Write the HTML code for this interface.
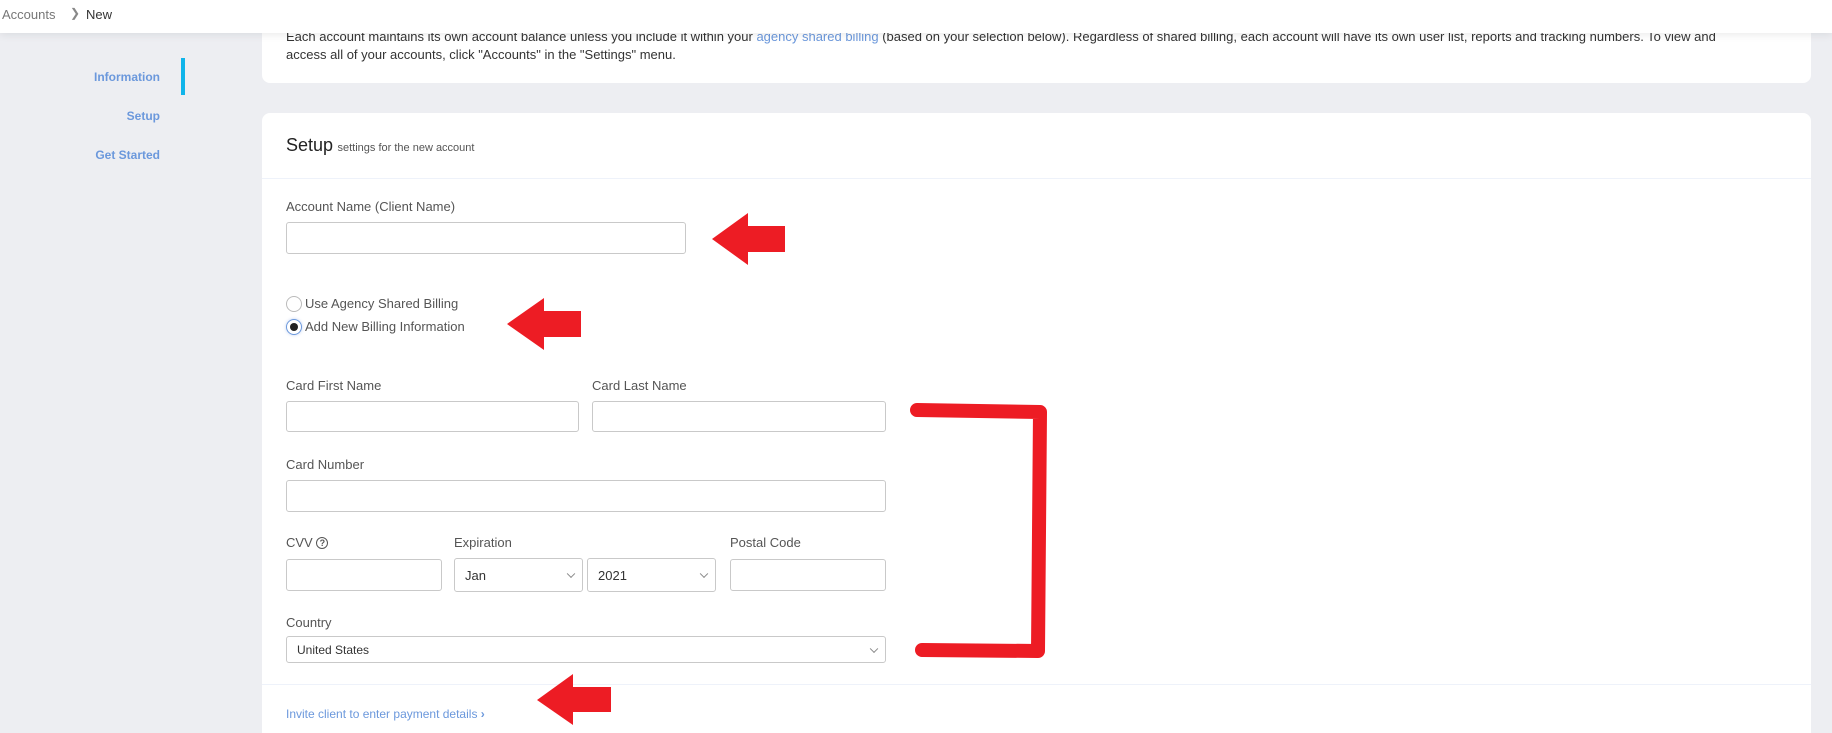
<!DOCTYPE html>
<html style="overflow:hidden;height:733px"><head><meta charset="utf-8"><style>
*{box-sizing:border-box;margin:0;padding:0}
body{width:1832px;height:733px;overflow:hidden;background:#edeef2;font-family:"Liberation Sans",sans-serif;color:#444;position:relative}
.a{position:absolute}
.hdr{left:0;top:0;width:1832px;height:33px;background:#fff;box-shadow:0 2px 8px rgba(0,0,0,.08);z-index:5;font-size:13px}
.card{background:#fff;border-radius:8px}
.lbl{font-size:13px;color:#555;line-height:16px}
.inp{border:1px solid #c9c9c9;border-radius:3px;background:#fff}
.nav{font-size:12px;font-weight:bold;color:#6b98dc;text-align:right;width:160px;left:0}
.sel{font-size:13px;color:#333;padding-left:10px;display:flex;align-items:center}
.chev{position:absolute;right:8px;top:50%;width:6px;height:6px;border-right:1.5px solid #888;border-bottom:1.5px solid #888;transform:translateY(-70%) rotate(45deg)}
</style></head><body>
<div class="a hdr"><span class="a" style="left:2px;top:7px;color:#777">Accounts</span><span class="a" style="left:70px;top:6px;color:#888;font-size:12px">&#10095;</span><span class="a" style="left:86px;top:7px;color:#333">New</span></div>

<div class="a nav" style="top:70px">Information</div>
<div class="a" style="left:181px;top:58px;width:4px;height:37px;background:#10b4ea"></div>
<div class="a nav" style="top:109px">Setup</div>
<div class="a nav" style="top:148px">Get Started</div>

<div class="a card" style="left:262px;top:0px;width:1549px;height:83px;border-radius:0 0 8px 8px"></div>
<div class="a" style="left:286px;top:28px;width:1500px;font-size:13px;line-height:18px;color:#333">Each account maintains its own account balance unless you include it within your <span style="color:#6b98dc">agency shared billing</span> (based on your selection below). Regardless of shared billing, each account will have its own user list, reports and tracking numbers. To view and<br>access all of your accounts, click "Accounts" in the "Settings" menu.</div>

<div class="a card" style="left:262px;top:113px;width:1549px;height:620px;border-radius:8px 8px 0 0"></div>
<div class="a" style="left:286px;top:135px;color:#222"><span style="font-size:18px">Setup</span> <span style="font-size:11px;color:#555">settings for the new account</span></div>
<div class="a" style="left:262px;top:178px;width:1549px;height:1px;background:#eef2fa"></div>

<div class="a lbl" style="left:286px;top:199px">Account Name (Client Name)</div>
<div class="a inp" style="left:286px;top:222px;width:400px;height:32px"></div>

<div class="a" style="left:286px;top:296px;width:16px;height:16px;border:1px solid #bbb;border-radius:50%"></div>
<div class="a lbl" style="left:305px;top:296px">Use Agency Shared Billing</div>
<div class="a" style="left:286px;top:319px;width:16px;height:16px;border:1px solid #6b98dc;border-radius:50%;box-shadow:0 0 3px rgba(100,140,220,.4)"><div style="margin:3px;width:8px;height:8px;border-radius:50%;background:#222"></div></div>
<div class="a lbl" style="left:305px;top:319px">Add New Billing Information</div>

<div class="a lbl" style="left:286px;top:378px">Card First Name</div>
<div class="a lbl" style="left:592px;top:378px">Card Last Name</div>
<div class="a inp" style="left:286px;top:401px;width:293px;height:31px"></div>
<div class="a inp" style="left:592px;top:401px;width:294px;height:31px"></div>

<div class="a lbl" style="left:286px;top:457px">Card Number</div>
<div class="a inp" style="left:286px;top:480px;width:600px;height:32px"></div>

<div class="a lbl" style="left:286px;top:535px">CVV <span style="display:inline-block;width:12px;height:12px;border:1.3px solid #555;border-radius:50%;font-size:9px;line-height:10px;text-align:center;font-weight:bold;vertical-align:1px">?</span></div>
<div class="a lbl" style="left:454px;top:535px">Expiration</div>
<div class="a lbl" style="left:730px;top:535px">Postal Code</div>
<div class="a inp" style="left:286px;top:559px;width:156px;height:32px"></div>
<div class="a inp sel" style="left:454px;top:558px;width:129px;height:34px">Jan<span class="chev"></span></div>
<div class="a inp sel" style="left:587px;top:558px;width:129px;height:34px">2021<span class="chev"></span></div>
<div class="a inp" style="left:730px;top:559px;width:156px;height:32px"></div>

<div class="a lbl" style="left:286px;top:615px">Country</div>
<div class="a inp sel" style="left:286px;top:636px;width:600px;height:27px;font-size:12px">United States<span class="chev"></span></div>

<div class="a" style="left:262px;top:684px;width:1549px;height:1px;background:#eef2fa"></div>
<div class="a" style="left:286px;top:707px;font-size:12px;color:#6b98dc">Invite client to enter payment details <b>&#8250;</b></div>

<svg class="a" style="left:0;top:0" width="1832" height="733">
<g fill="#ed1c24">
<polygon points="712,239 748,213 748,226 785,226 785,252 748,252 748,265"/>
<polygon points="507,324 544,298 544,311 581,311 581,337 544,337 544,350"/>
<polygon points="537,700 573,674 573,687 611,687 611,712 573,712 573,725"/>
</g>
<path d="M917,410 L1040,412 L1038,651 L922,650" fill="none" stroke="#ed1c24" stroke-width="14" stroke-linecap="round" stroke-linejoin="round"/>
</svg>
</body></html>
